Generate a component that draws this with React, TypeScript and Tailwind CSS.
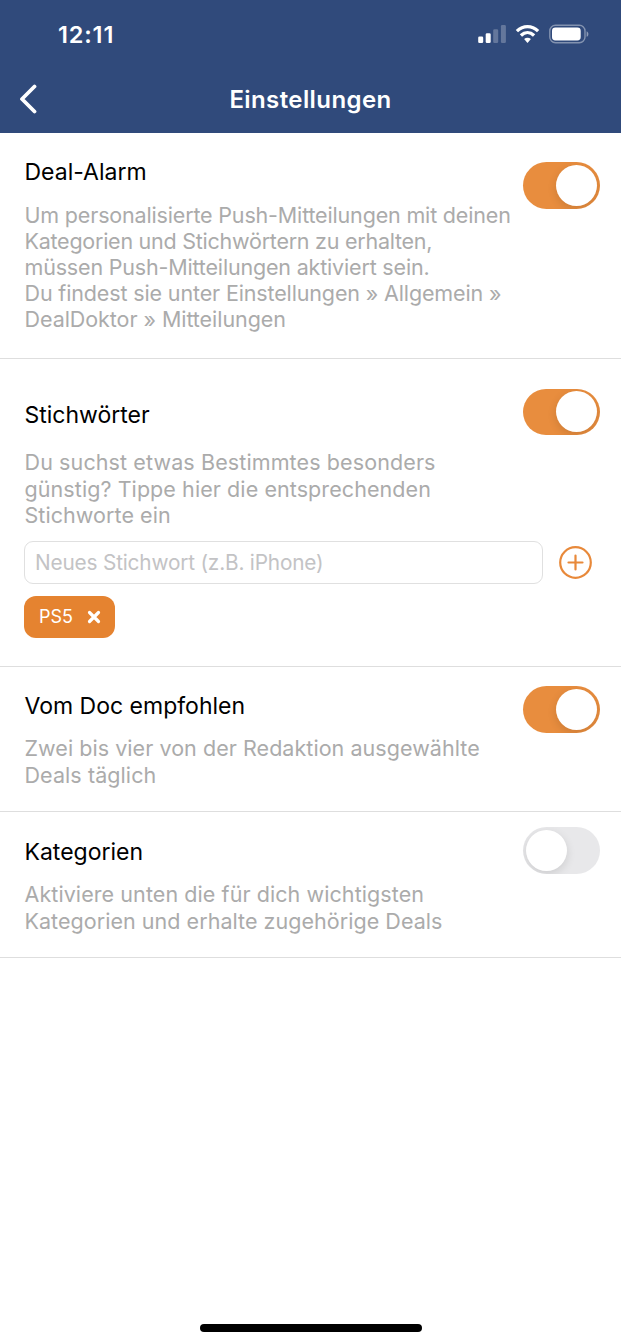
import React from "react";

function Toggle({ on = false, label }: { on?: boolean; label: string }) {
  return (
    <button
      type="button"
      role="switch"
      aria-checked={on}
      aria-label={label}
      className={`flex h-[46.5px] w-[77px] shrink-0 items-center overflow-hidden rounded-full px-[3px] ${
        on ? "justify-end bg-[#e88d3e]" : "justify-start bg-[#e8e8ea]"
      }`}
    >
      <span className="size-[41px] rounded-full bg-white shadow-[0_3px_10px_rgba(0,0,0,0.12)]" />
    </button>
  );
}

function Title({ children }: { children: React.ReactNode }) {
  return <h2 className="pl-[0.5px] text-[23px] leading-[28px] text-black">{children}</h2>;
}

type Line = [text: string, tracking: string];

function Copy({ lines, className }: { lines: Line[]; className: string }) {
  return (
    <p className={`pl-[0.5px] text-[21.5px] text-[#ababab] ${className}`}>
      {lines.map(([text, tracking]) => (
        <span key={text} className={`block whitespace-nowrap ${tracking}`}>
          {text}
        </span>
      ))}
    </p>
  );
}

function StatusIcons() {
  return (
    <svg width="112" height="22" viewBox="0 0 112 22" fill="none">
      <rect x="0.200" y="13.400" width="5" height="6.600" rx="1.300" fill="#fff" />
      <rect x="7.700" y="10.300" width="5" height="9.700" rx="1.300" fill="#fff" />
      <rect x="15.200" y="6.300" width="5" height="13.700" rx="1.300" fill="#fff" fillOpacity=".25" />
      <rect x="22.900" y="2.100" width="5" height="17.900" rx="1.300" fill="#fff" fillOpacity=".25" />
      <g stroke="#fff" strokeWidth="3.300">
        <path d="M38.900 8.100C45.300 2 53.700 2 60.100 8.100" />
        <path d="M42.900 12.500C46.900 8.700 52.100 8.700 56.100 12.500" />
      </g>
      <path d="M46.100 16.100C48.200 14.200 50.800 14.200 52.900 16.100L49.500 19.900Z" fill="#fff" />
      <rect x="71.800" y="2.300" width="35.200" height="17.400" rx="5.600" stroke="#fff" strokeOpacity=".4" strokeWidth="1.400" />
      <rect x="74" y="4.600" width="28.700" height="12.800" rx="3.400" fill="#fff" />
      <path d="M108.600 8.200c2.400.9 2.400 4.700 0 5.600Z" fill="#fff" fillOpacity=".45" />
    </svg>
  );
}

export default function App() {
  return (
    <div className="flex h-[1344px] w-[621px] flex-col bg-white font-['Inter',sans-serif]">
      <header className="flex h-[133px] flex-col bg-[#304a7b] text-white">
        <div className="flex h-[68px] items-center justify-between pr-[31px] pl-[58px]">
          <span className="pt-px text-[23.5px] font-[560] tracking-[0.85px]">12:11</span>
          <StatusIcons />
        </div>
        <div className="grid h-[62px] grid-cols-[60px_1fr_60px] items-center">
          <button type="button" aria-label="Zurück" className="pl-[18px]">
            <svg width="20" height="30" viewBox="0 0 20 30" fill="none" stroke="#fff" strokeWidth="3.800" strokeLinecap="round" strokeLinejoin="round">
              <path d="M16.500 2.500 4 15l12.500 12.500" />
            </svg>
          </button>
          <h1 className="pt-px text-center text-[24px] font-[560] tracking-[0.4px]">Einstellungen</h1>
        </div>
      </header>
      <main className="flex flex-col">
        <section className="flex h-[226px] justify-between border-b border-[#dedede] pr-[21px] pl-6">
          <div className="w-[490px] pt-[25px]">
            <Title>Deal-Alarm</Title>
            <Copy
              className="mt-[16px] leading-[26px]"
              lines={[
                ["Um personalisierte Push-Mitteilungen mit deinen", "tracking-[-0.17px]"],
                ["Kategorien und Stichwörtern zu erhalten,", "tracking-[-0.25px]"],
                ["müssen Push-Mitteilungen aktiviert sein.", "tracking-[-0.18px]"],
                ["Du findest sie unter Einstellungen » Allgemein »", "tracking-[-0.14px]"],
                ["DealDoktor » Mitteilungen", "tracking-[-0.06px]"],
              ]}
            />
          </div>
          <div className="pt-[29px]"><Toggle on label="Deal-Alarm" /></div>
        </section>
        <section className="flex h-[308px] flex-col border-b border-[#dedede] pr-[21px] pl-6">
          <div className="flex h-[182px] justify-between">
            <div className="pt-[42px]">
              <Title>Stichwörter</Title>
              <Copy
                className="mt-[20px] leading-[26.700px]"
                lines={[
                  ["Du suchst etwas Bestimmtes besonders", "tracking-[0.11px]"],
                  ["günstig? Tippe hier die entsprechenden", "tracking-[0.08px]"],
                  ["Stichworte ein", "tracking-[0.06px]"],
                ]}
              />
            </div>
            <div className="pt-[29.5px]"><Toggle on label="Stichwörter" /></div>
          </div>
          <div className="flex items-center gap-4">
            <div className="flex h-[43px] w-[519px] items-center rounded-[9px] border border-[#e0e0e0] pl-[10px] text-[20.800px] tracking-[-0.18px] text-[#c3c3c5]">
              Neues Stichwort (z.B. iPhone)
            </div>
            <svg width="33" height="33" viewBox="0 0 33 33" fill="none" stroke="#e8893a" strokeWidth="2.200">
              <circle cx="16.500" cy="16.500" r="15.300" />
              <path d="M16.500 9.500v14M9.500 16.500h14" strokeLinecap="round" />
            </svg>
          </div>
          <div className="mt-[11.5px] flex h-[42px] w-[91px] items-center gap-[14px] rounded-[12px] bg-[#e58330] pl-[15px] text-[18px] text-white">
            <span>PS5</span>
            <svg width="14" height="14" viewBox="0 0 14 14" stroke="#fff" strokeWidth="3.200" strokeLinecap="round">
              <path d="m2.500 2.500 9 9m0-9-9 9" />
            </svg>
          </div>
        </section>
        <section className="flex h-[145px] justify-between border-b border-[#dedede] pr-[21px] pl-6">
          <div className="pt-[25px]">
            <Title>Vom Doc empfohlen</Title>
            <Copy
              className="mt-[15px] leading-[26.500px]"
              lines={[
                ["Zwei bis vier von der Redaktion ausgewählte", "tracking-[0.05px]"],
                ["Deals täglich", "tracking-[0.08px]"],
              ]}
            />
          </div>
          <div className="pt-[19px]"><Toggle on label="Vom Doc empfohlen" /></div>
        </section>
        <section className="flex h-[146px] justify-between border-b border-[#dedede] pr-[21px] pl-6">
          <div className="pt-[26px]">
            <Title>Kategorien</Title>
            <Copy
              className="mt-[15px] leading-[26.500px]"
              lines={[
                ["Aktiviere unten die für dich wichtigsten", "tracking-[0.08px]"],
                ["Kategorien und erhalte zugehörige Deals", "tracking-[0.04px]"],
              ]}
            />
          </div>
          <div className="pt-[15px]"><Toggle label="Kategorien" /></div>
        </section>
      </main>
      <div className="mx-auto mt-auto mb-3 h-2 w-[222px] rounded-full bg-black" />
    </div>
  );
}
